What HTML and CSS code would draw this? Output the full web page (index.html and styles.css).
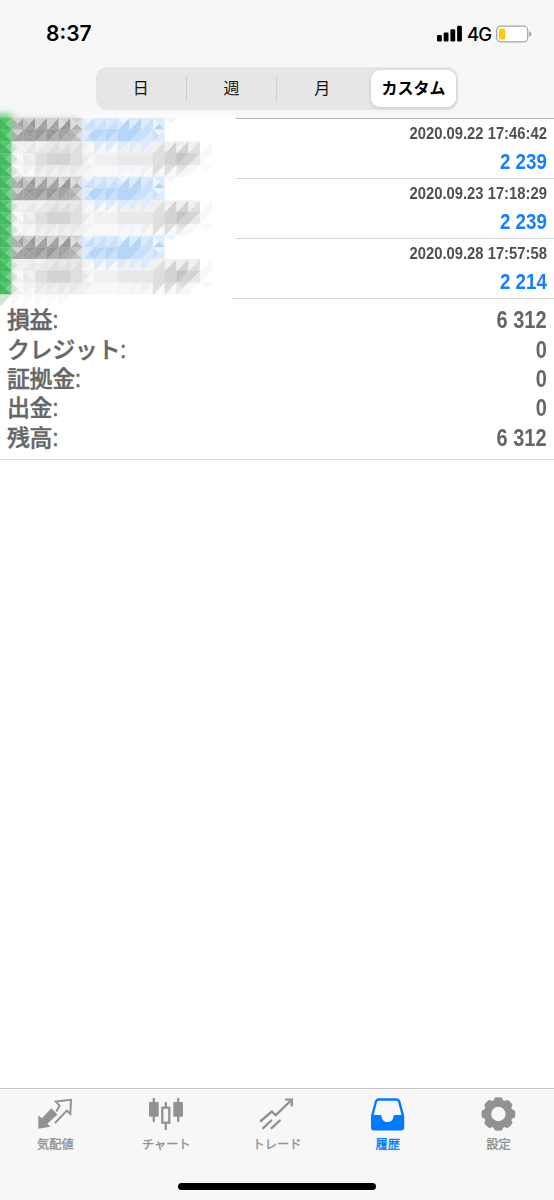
FILE: index.html
```html
<!doctype html>
<html lang="ja">

<head>
    <meta charset="utf-8">
    <title>履歴</title>
    <link rel="stylesheet" href="styles.css">
</head>

<body>

<div class="screen">
    <header class="header">
        <div class="status">
            <div class="time">8:37</div>
            <div class="grow"></div>
            <svg class="signal" width="26" height="17" viewBox="0 0 26 17">
                <rect x="0" y="10" width="4.8" height="6.4" rx="1.2"/>
                <rect x="6.7" y="7.4" width="4.8" height="9" rx="1.2"/>
                <rect x="13.4" y="4.2" width="4.8" height="12.2" rx="1.2"/>
                <rect x="20.1" y="0.7" width="4.8" height="15.7" rx="1.2"/>
            </svg>
            <div class="network">4G</div>
            <svg class="battery" width="36" height="18" viewBox="0 0 36 18">
                <rect x="0.7" y="1.2" width="31" height="15.6" rx="4" fill="#fff" stroke="#a3a3a3" stroke-width="1.2"/>
                <rect x="3" y="3.4" width="6.3" height="11.2" rx="1.5" fill="#fdc90c"/>
                <path d="M33.3 6.3q2 1 2 2.7t-2 2.7z" fill="#999"/>
            </svg>
        </div>
        <div class="segments">
            <div class="segment">日</div>
            <div class="segment line">週</div>
            <div class="segment line">月</div>
            <div class="segment active">カスタム</div>
        </div>
    </header>

    <main class="history">
        <svg class="mosaic" data-mosaic width="240" height="210" viewBox="0 -20 240 210">
            <defs>
                <filter id="soft" x="-50%" y="-100%" width="200%" height="300%">
                    <feGaussianBlur stdDeviation="4"/>
                </filter>
                <linearGradient id="fade" x1="0" y1="0" x2="0" y2="1">
                    <stop offset="0" stop-color="#fff" stop-opacity="0"/>
                    <stop offset="1" stop-color="#fff"/>
                </linearGradient>
            </defs>
            <rect x="0" y="-8" width="235.5" height="8" fill="url(#fade)" opacity="0.7"/>
            <rect x="-12" y="-3" width="24" height="12" fill="#43bb5d" filter="url(#soft)"/>
            <rect x="12" y="1" width="68" height="8" fill="#aaa" filter="url(#soft)" opacity="0.6"/>
            <rect x="0" y="0" width="235.5" height="180" fill="#fff"/>
            <rect x="0" y="180" width="232" height="4" fill="#fff"/>
        </svg>

        <div class="deal">
            <div class="date">2020.09.22 17:46:42</div>
            <div class="profit">2 239</div>
        </div>
        <div class="deal">
            <div class="date">2020.09.23 17:18:29</div>
            <div class="profit">2 239</div>
        </div>
        <div class="deal">
            <div class="date">2020.09.28 17:57:58</div>
            <div class="profit">2 214</div>
        </div>

        <div class="summary">
            <div class="row"><label>損益:</label><div class="amount">6 312</div></div>
            <div class="row"><label>クレジット:</label><div class="amount">0</div></div>
            <div class="row"><label>証拠金:</label><div class="amount">0</div></div>
            <div class="row"><label>出金:</label><div class="amount">0</div></div>
            <div class="row"><label>残高:</label><div class="amount">6 312</div></div>
        </div>
    </main>

    <nav class="tabs">
        <div class="tab">
            <svg width="36" height="36" viewBox="0 0 36 36">
                <path d="M1.3 19.5L5 22.3L14.3 12.2L20.5 18.4L10.3 27.8L13.5 30.8L1.3 32.8z" fill="currentColor"/>
                <path d="M19.3 15.6L22.6 9.6L18.8 5.6L34 3.8L33.3 18L29.8 14.6L18 27" fill="none" stroke="currentColor" stroke-width="2"/>
            </svg>
            <span>気配値</span>
        </div>
        <div class="tab">
            <svg width="36" height="36" viewBox="0 0 36 36" stroke="currentColor" stroke-width="2.3" stroke-linecap="round">
                <path d="M5.8 3v22M17.8 7v4M17.8 27.5v5.7M30.2 3v22"/>
                <rect x="1" y="6" width="9.7" height="14.8" rx="1" fill="currentColor" stroke="none"/>
                <rect x="25.3" y="6" width="9.7" height="14.8" rx="1" fill="currentColor" stroke="none"/>
                <rect x="14.3" y="11.7" width="7" height="15" fill="none"/>
            </svg>
            <span>チャート</span>
        </div>
        <div class="tab">
            <svg width="36" height="36" viewBox="0 0 36 36" fill="none" stroke="currentColor" stroke-width="2.4" stroke-linecap="round">
                <path d="M1.8 25L12.8 15.7L16.8 19.2L32 4.5"/>
                <path d="M27 3.6H32.8V9.4M4.2 32.2L12.3 24.5M12.6 32.2L20.8 24.5"/>
            </svg>
            <span>トレード</span>
        </div>
        <div class="tab active">
            <svg width="36" height="36" viewBox="0 0 36 36">
                <path fill="currentColor" fill-rule="evenodd" d="M8.5 2.2H26.8Q29.4 2.2 30.2 4.8L34.2 19.5V32Q34.2 34.4 31.8 34.4H3.4Q1 34.4 1 32V19.5L5 4.8Q5.8 2.2 8.5 2.2zM8.8 4.7Q7.4 4.7 7 6L3.7 19H10.2Q11.4 19 11.6 20.2C11.8 28 23.3 28 23.5 20.2Q23.7 19 24.9 19H31.5L28.1 6Q27.7 4.7 26.3 4.7z"/>
            </svg>
            <span>履歴</span>
        </div>
        <div class="tab">
            <svg width="36" height="36" viewBox="0 0 36 36">
                <circle cx="17.4" cy="18" r="10.8" fill="none" stroke="currentColor" stroke-width="7.2"/>
                <g data-teeth fill="currentColor"></g>
            </svg>
            <span>設定</span>
        </div>
    </nav>
    <div class="home"></div>
</div>

<script src="script.js"></script>

</body>

</html>
```

FILE: styles.css
```css
html,
body {
    padding: 0;
    margin: 0;
    background: #fff;
    font-family: "Liberation Sans", "Noto Sans CJK JP", sans-serif;
}

.screen {
    display: flex;
    flex-direction: column;
    height: 1200px;
    overflow: hidden;
}

.grow {
    flex: 1;
}

.header {
    box-sizing: border-box;
    height: 119px;
    background: #f7f7f7;
    border-bottom: 1px solid #b9b9b9;
}

.status {
    display: flex;
    align-items: center;
    height: 67px;
    padding: 0 22px 0 46px;
    font-family: Inter, sans-serif;
    color: #000;
}

.time {
    font-size: 21px;
    font-weight: 600;
}

.signal {
    margin-right: 4px;
}

.network {
    width: 25px;
    margin-right: 4px;
    font-size: 18.5px;
    font-weight: 500;
    letter-spacing: -1px;
}

.segments {
    display: flex;
    box-sizing: border-box;
    width: 362px;
    height: 43px;
    margin-left: 96px;
    padding: 2px 2px 2px 0;
    border-radius: 11px;
    background: #e6e6e7;
    font-family: "Noto Sans CJK JP", sans-serif;
    font-size: 16px;
    color: #111;
}

.segment {
    box-sizing: border-box;
    flex: 1;
    line-height: 37px;
    text-align: center;
}

.line {
    height: 25px;
    margin: 7px 0;
    border-left: 1px solid #d0d0d2;
    line-height: 23px;
}

.segment.active {
    flex: none;
    width: 85px;
    margin: 1px 0 1px 4px;
    border-radius: 9px;
    background: #fff;
    box-shadow: 0 1px 4px rgba(0, 0, 0, 0.14);
    font-weight: bold;
    line-height: 35px;
    color: #000;
}

.history {
    position: relative;
    flex: 1;
}

/* the deal details are covered up */
.mosaic {
    position: absolute;
    left: 0;
    top: -21px;
}

.deal {
    display: flex;
    flex-direction: column;
    align-items: flex-end;
    box-sizing: border-box;
    height: 60px;
    padding: 5px 7px 0 0;
    border-bottom: 1px solid #d8d8d8;
    font-weight: bold;
}

.date,
.profit,
.amount {
    transform: scaleX(0.87);
    transform-origin: right;
    white-space: pre;
}

.date {
    font-size: 17px;
    line-height: 20px;
    color: #4e4e53;
}

.profit {
    margin-top: 6px;
    font-size: 21.5px;
    line-height: 24px;
    color: #147efb;
}

.summary {
    box-sizing: border-box;
    height: 161px;
    padding: 7px 7px 0 7px;
    border-bottom: 1px solid #d8d8d8;
    font-size: 23px;
    font-weight: bold;
    color: #666;
}

.row {
    display: flex;
    justify-content: space-between;
    align-items: center;
    height: 29.4px;
    line-height: 29px;
}

.row label {
    font-weight: 500;
    letter-spacing: -0.4px;
    -webkit-text-stroke: 0.4px #666;
}

.tabs {
    display: flex;
    box-sizing: border-box;
    height: 95px;
    padding-top: 7px;
    background: #f7f7f7;
    border-top: 1px solid #c4c4c4;
    font-family: "Noto Sans CJK JP", sans-serif;
    font-size: 12.2px;
    color: #929292;
}

.tab {
    display: flex;
    flex: 1;
    flex-direction: column;
    align-items: center;
}

.tab span {
    margin-top: 3px;
    line-height: 18px;
    -webkit-text-stroke: 0.35px currentColor;
}

.tab.active {
    color: #007aff;
}

.home {
    height: 17px;
    background: #f7f7f7;
}

.home::before {
    content: "";
    display: block;
    width: 198px;
    height: 7px;
    margin: 0 auto;
    border-radius: 4px;
    background: #000;
}
```

FILE: script.js
```js
const NS = 'http://www.w3.org/2000/svg';
const SIZE = 11.77;

const colors = {
  G: '#42ba5b', g: '#56c56f', e: '#7fcc90', f: '#cfe8d4', h: '#9fb8a2',
  0: '#ffffff', 1: '#f8f8f8', 2: '#f0f0f0', 3: '#e8e8e8', 4: '#dedede',
  5: '#d2d2d2', 6: '#c3c3c3', 7: '#b0b0b0', 8: '#a2a2a2', 9: '#989898',
  a: '#eef5fd', b: '#dcebfc', c: '#c8e0fb', d: '#b4d4f8'
};

// each tile: top, right, bottom, left
const tiles = [
  'geGG 587h 5986 5885 5885 5994 5474 accb bccb bccb addb bddb bccb bbda a000',
  'geGG 588h 9888 9779 9779 8778 6467 bdcb dccd dccd dddd dccd cbbc abbc 0000',
  'geGG 222f 2332 2332 3443 3443 3443 a112 b11b b11b b22b b22b b22b 2442 2552 2552 2442 0110',
  'geGG 112f 2233 4444 5555 5555 4444 2113 2222 2222 3333 3333 3333 4444 5555 6556 5335 1001',
  'geGG 112f 2112 3223 3223 3223 3223 2112 1111 1111 a11a a11a 2112 4114 4114 4113 1001 1000'
];

const polygon = (points, fill, parent) => {
  const el = document.createElementNS(NS, 'polygon');
  el.setAttribute('points', points.map(p => p.join(',')).join(' '));
  el.setAttribute('fill', fill);
  el.setAttribute('stroke', fill);
  el.setAttribute('stroke-width', 0.3);
  parent.appendChild(el);
};

const drawRow = (row, y, svg) => {
  row.split(' ').forEach((tile, i) => {
    const x = i * SIZE;
    const corners = [[x, y], [x + SIZE, y], [x + SIZE, y + SIZE], [x, y + SIZE]];
    const center = [x + SIZE / 2, y + SIZE / 2];
    [...tile].forEach((key, n) => {
      polygon([corners[n], corners[(n + 1) % 4], center], colors[key], svg);
    });
  });
};

const mosaic = document.querySelector('[data-mosaic]');
for (let i = 0; i < 15; i++) {
  drawRow(tiles[i % 5], i * SIZE, mosaic);
}
drawRow('f00f 1001 1001 1001 1001 1001', 15 * SIZE, mosaic);

const teeth = document.querySelector('[data-teeth]');
for (let i = 0; i < 8; i++) {
  const rect = document.createElementNS(NS, 'rect');
  rect.setAttribute('x', 12.9);
  rect.setAttribute('y', 1.2);
  rect.setAttribute('width', 9);
  rect.setAttribute('height', 7);
  rect.setAttribute('rx', 3);
  rect.setAttribute('transform', `rotate(${i * 45} 17.4 18)`);
  teeth.appendChild(rect);
}
```
